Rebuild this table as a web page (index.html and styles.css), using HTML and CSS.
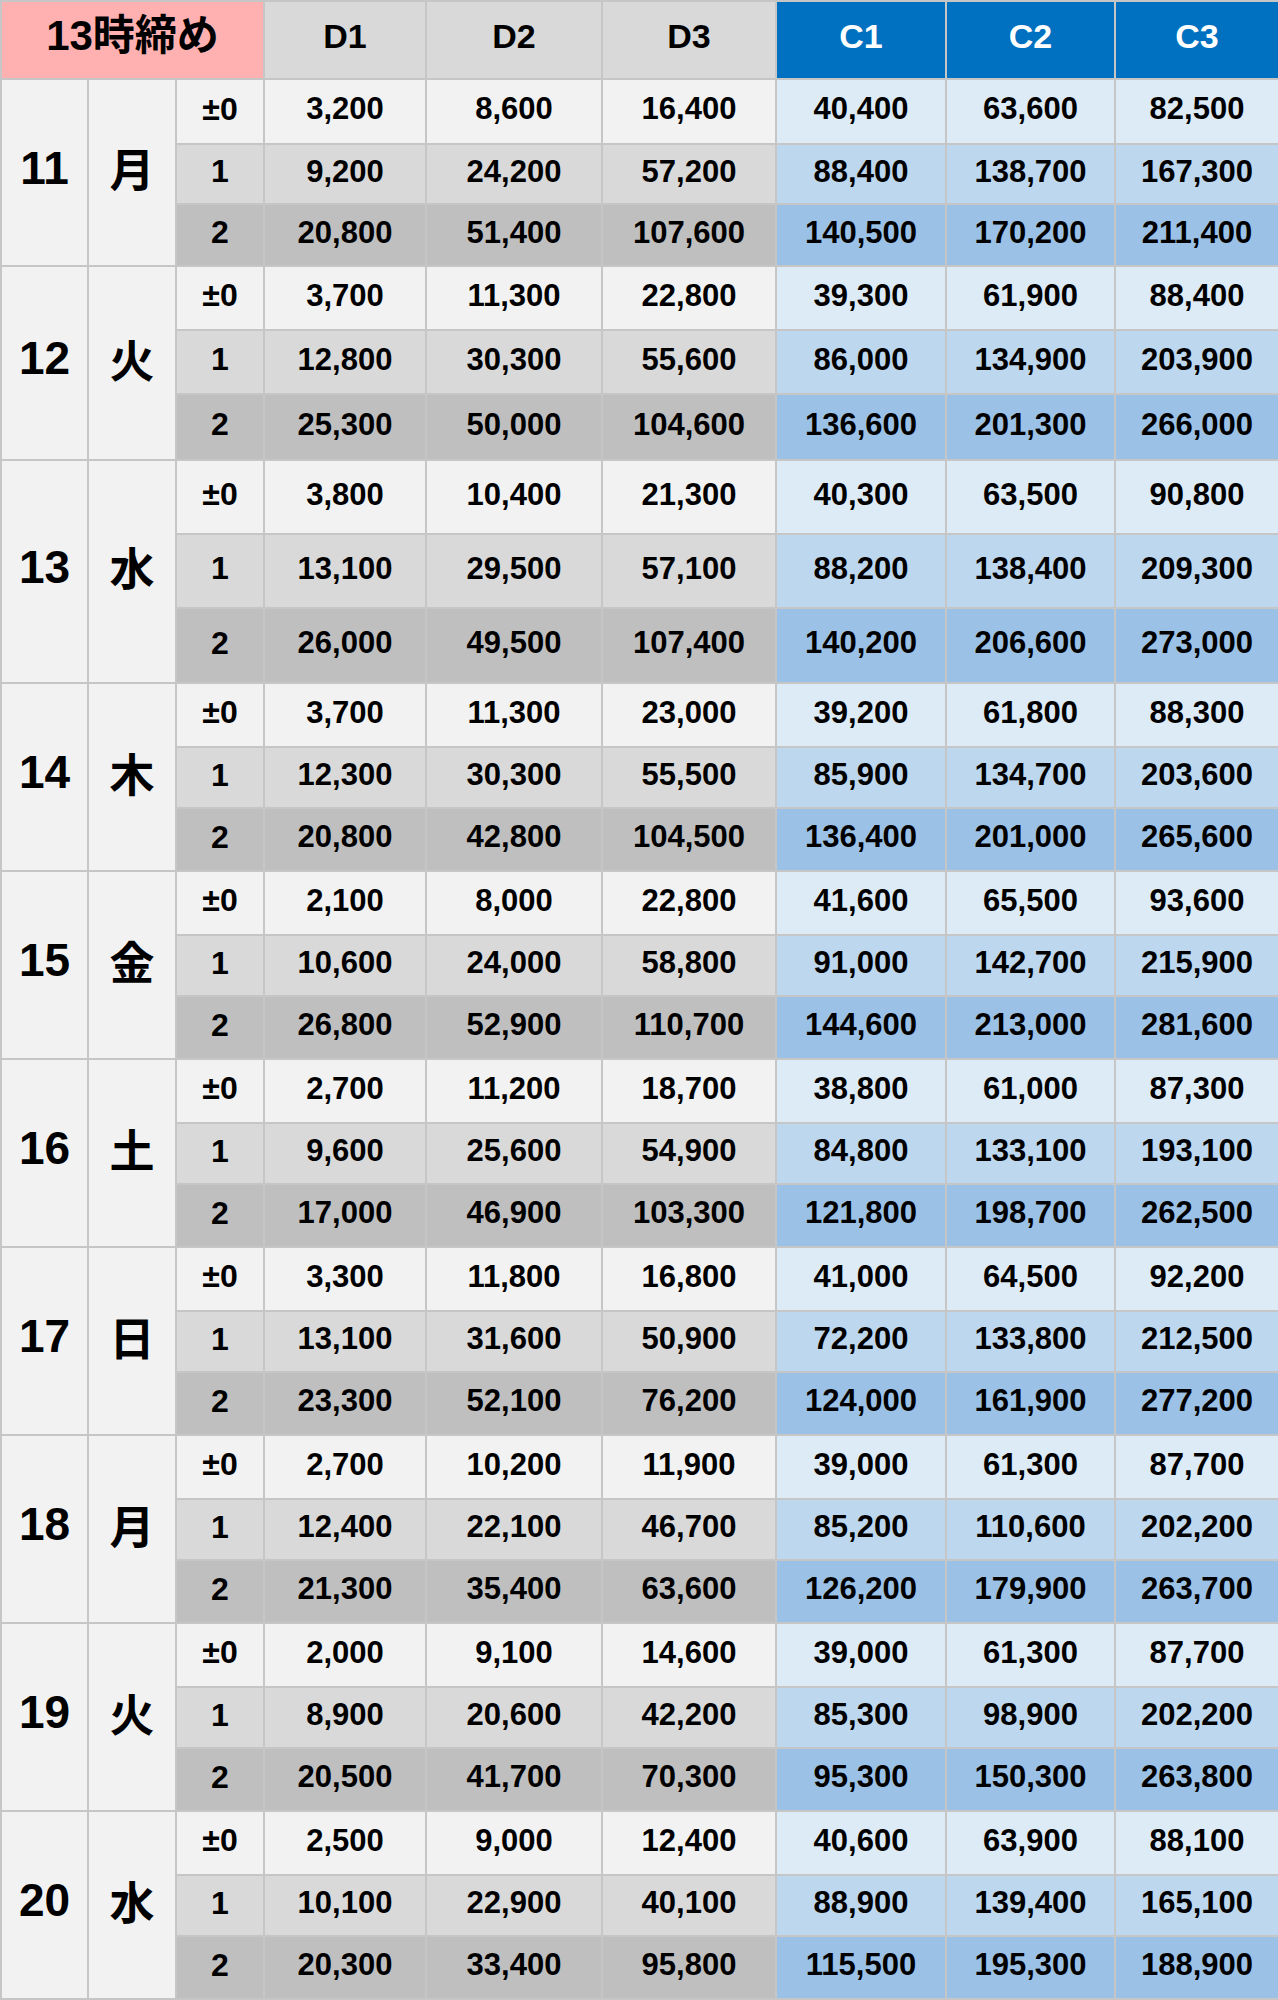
FILE: index.html
```html
<!DOCTYPE html>
<html lang="ja">
<head>
<meta charset="utf-8">
<title>13時締め</title>
<link rel="stylesheet" href="styles.css">
</head>
<body>
<table class="grid">
  <colgroup>
    <col class="w-day"><col class="w-wd"><col class="w-lbl">
    <col class="w-d1"><col class="w-d2"><col class="w-d3">
    <col class="w-c1"><col class="w-c2"><col class="w-c3">
  </colgroup>
  <thead>
    <tr class="head">
      <th colspan="3" class="h-title">13時締め</th>
      <th class="h-d">D1</th><th class="h-d">D2</th><th class="h-d">D3</th>
      <th class="h-c">C1</th><th class="h-c">C2</th><th class="h-c">C3</th>
    </tr>
  </thead>
  <tbody class="blk b11">
    <tr class="r0"><td rowspan="3" class="day">11</td><td rowspan="3" class="wd">月</td><td class="lbl">±0</td><td>3,200</td><td>8,600</td><td>16,400</td><td class="c">40,400</td><td class="c">63,600</td><td class="c">82,500</td></tr>
    <tr class="r1"><td class="lbl">1</td><td>9,200</td><td>24,200</td><td>57,200</td><td class="c">88,400</td><td class="c">138,700</td><td class="c">167,300</td></tr>
    <tr class="r2"><td class="lbl">2</td><td>20,800</td><td>51,400</td><td>107,600</td><td class="c">140,500</td><td class="c">170,200</td><td class="c">211,400</td></tr>
  </tbody>
  <tbody class="blk b12">
    <tr class="r0"><td rowspan="3" class="day">12</td><td rowspan="3" class="wd">火</td><td class="lbl">±0</td><td>3,700</td><td>11,300</td><td>22,800</td><td class="c">39,300</td><td class="c">61,900</td><td class="c">88,400</td></tr>
    <tr class="r1"><td class="lbl">1</td><td>12,800</td><td>30,300</td><td>55,600</td><td class="c">86,000</td><td class="c">134,900</td><td class="c">203,900</td></tr>
    <tr class="r2"><td class="lbl">2</td><td>25,300</td><td>50,000</td><td>104,600</td><td class="c">136,600</td><td class="c">201,300</td><td class="c">266,000</td></tr>
  </tbody>
  <tbody class="blk b13">
    <tr class="r0"><td rowspan="3" class="day">13</td><td rowspan="3" class="wd">水</td><td class="lbl">±0</td><td>3,800</td><td>10,400</td><td>21,300</td><td class="c">40,300</td><td class="c">63,500</td><td class="c">90,800</td></tr>
    <tr class="r1"><td class="lbl">1</td><td>13,100</td><td>29,500</td><td>57,100</td><td class="c">88,200</td><td class="c">138,400</td><td class="c">209,300</td></tr>
    <tr class="r2"><td class="lbl">2</td><td>26,000</td><td>49,500</td><td>107,400</td><td class="c">140,200</td><td class="c">206,600</td><td class="c">273,000</td></tr>
  </tbody>
  <tbody class="blk">
    <tr class="r0"><td rowspan="3" class="day">14</td><td rowspan="3" class="wd">木</td><td class="lbl">±0</td><td>3,700</td><td>11,300</td><td>23,000</td><td class="c">39,200</td><td class="c">61,800</td><td class="c">88,300</td></tr>
    <tr class="r1"><td class="lbl">1</td><td>12,300</td><td>30,300</td><td>55,500</td><td class="c">85,900</td><td class="c">134,700</td><td class="c">203,600</td></tr>
    <tr class="r2"><td class="lbl">2</td><td>20,800</td><td>42,800</td><td>104,500</td><td class="c">136,400</td><td class="c">201,000</td><td class="c">265,600</td></tr>
  </tbody>
  <tbody class="blk">
    <tr class="r0"><td rowspan="3" class="day">15</td><td rowspan="3" class="wd">金</td><td class="lbl">±0</td><td>2,100</td><td>8,000</td><td>22,800</td><td class="c">41,600</td><td class="c">65,500</td><td class="c">93,600</td></tr>
    <tr class="r1"><td class="lbl">1</td><td>10,600</td><td>24,000</td><td>58,800</td><td class="c">91,000</td><td class="c">142,700</td><td class="c">215,900</td></tr>
    <tr class="r2"><td class="lbl">2</td><td>26,800</td><td>52,900</td><td>110,700</td><td class="c">144,600</td><td class="c">213,000</td><td class="c">281,600</td></tr>
  </tbody>
  <tbody class="blk">
    <tr class="r0"><td rowspan="3" class="day">16</td><td rowspan="3" class="wd">土</td><td class="lbl">±0</td><td>2,700</td><td>11,200</td><td>18,700</td><td class="c">38,800</td><td class="c">61,000</td><td class="c">87,300</td></tr>
    <tr class="r1"><td class="lbl">1</td><td>9,600</td><td>25,600</td><td>54,900</td><td class="c">84,800</td><td class="c">133,100</td><td class="c">193,100</td></tr>
    <tr class="r2"><td class="lbl">2</td><td>17,000</td><td>46,900</td><td>103,300</td><td class="c">121,800</td><td class="c">198,700</td><td class="c">262,500</td></tr>
  </tbody>
  <tbody class="blk">
    <tr class="r0"><td rowspan="3" class="day">17</td><td rowspan="3" class="wd">日</td><td class="lbl">±0</td><td>3,300</td><td>11,800</td><td>16,800</td><td class="c">41,000</td><td class="c">64,500</td><td class="c">92,200</td></tr>
    <tr class="r1"><td class="lbl">1</td><td>13,100</td><td>31,600</td><td>50,900</td><td class="c">72,200</td><td class="c">133,800</td><td class="c">212,500</td></tr>
    <tr class="r2"><td class="lbl">2</td><td>23,300</td><td>52,100</td><td>76,200</td><td class="c">124,000</td><td class="c">161,900</td><td class="c">277,200</td></tr>
  </tbody>
  <tbody class="blk">
    <tr class="r0"><td rowspan="3" class="day">18</td><td rowspan="3" class="wd">月</td><td class="lbl">±0</td><td>2,700</td><td>10,200</td><td>11,900</td><td class="c">39,000</td><td class="c">61,300</td><td class="c">87,700</td></tr>
    <tr class="r1"><td class="lbl">1</td><td>12,400</td><td>22,100</td><td>46,700</td><td class="c">85,200</td><td class="c">110,600</td><td class="c">202,200</td></tr>
    <tr class="r2"><td class="lbl">2</td><td>21,300</td><td>35,400</td><td>63,600</td><td class="c">126,200</td><td class="c">179,900</td><td class="c">263,700</td></tr>
  </tbody>
  <tbody class="blk">
    <tr class="r0"><td rowspan="3" class="day">19</td><td rowspan="3" class="wd">火</td><td class="lbl">±0</td><td>2,000</td><td>9,100</td><td>14,600</td><td class="c">39,000</td><td class="c">61,300</td><td class="c">87,700</td></tr>
    <tr class="r1"><td class="lbl">1</td><td>8,900</td><td>20,600</td><td>42,200</td><td class="c">85,300</td><td class="c">98,900</td><td class="c">202,200</td></tr>
    <tr class="r2"><td class="lbl">2</td><td>20,500</td><td>41,700</td><td>70,300</td><td class="c">95,300</td><td class="c">150,300</td><td class="c">263,800</td></tr>
  </tbody>
  <tbody class="blk">
    <tr class="r0"><td rowspan="3" class="day">20</td><td rowspan="3" class="wd">水</td><td class="lbl">±0</td><td>2,500</td><td>9,000</td><td>12,400</td><td class="c">40,600</td><td class="c">63,900</td><td class="c">88,100</td></tr>
    <tr class="r1"><td class="lbl">1</td><td>10,100</td><td>22,900</td><td>40,100</td><td class="c">88,900</td><td class="c">139,400</td><td class="c">165,100</td></tr>
    <tr class="r2"><td class="lbl">2</td><td>20,300</td><td>33,400</td><td>95,800</td><td class="c">115,500</td><td class="c">195,300</td><td class="c">188,900</td></tr>
  </tbody>
</table>
</body>
</html>
```
FILE: styles.css
```css
html, body {
  margin: 0;
  padding: 0;
  background: #ffffff;
}

.grid {
  width: 1278px;
  border-collapse: collapse;
  table-layout: fixed;
  font-family: "Liberation Sans", Arial, "Noto Sans CJK JP", sans-serif;
  font-weight: bold;
  color: #000;
}

.w-day { width: 87px; }
.w-wd  { width: 88px; }
.w-lbl { width: 88px; }
.w-d1  { width: 162px; }
.w-d2  { width: 176px; }
.w-d3  { width: 174px; }
.w-c1  { width: 170px; }
.w-c2  { width: 169px; }
.w-c3  { width: 164px; }

.grid th,
.grid td {
  border: 2px solid #c6c6c6;
  text-align: center;
  vertical-align: middle;
  padding: 0 0 6px 0;
  font-size: 31px;
  line-height: 1;
  box-sizing: border-box;
  white-space: nowrap;
}

.grid td.lbl {
  font-size: 32px;
}

.grid .head th {
  height: 78px;
  padding-bottom: 8px;
  font-size: 34px;
}

.grid .head .h-title {
  background: #ffb1b1;
  font-family: "Liberation Sans", Arial, "Noto Sans CJK JP", sans-serif;
  font-size: 42px;
}

.grid .h-d {
  background: #d9d9d9;
}

.grid .h-c {
  background: #0070c0;
  color: #ffffff;
}

.grid td.day,
.grid td.wd {
  background: #f2f2f2;
  font-size: 46px;
  padding-bottom: 10px;
}

.grid td.wd {
  font-family: "Noto Sans CJK JP", "Liberation Sans", sans-serif;
  font-size: 45px;
  font-weight: 700;
}

.r0 td { background: #f2f2f2; height: 64px; }
.r1 td { background: #d9d9d9; height: 61px; }
.r2 td { background: #bfbfbf; height: 63px; }

.r0 td.c { background: #ddebf7; }
.r1 td.c { background: #bdd7ee; }
.r2 td.c { background: #9bc2e6; }

.b11 .r0 td { height: 65px; }
.b11 .r1 td { height: 60px; }
.b11 .r2 td { height: 62px; }

.b12 .r0 td { height: 64px; }
.b12 .r1 td { height: 64px; }
.b12 .r2 td { height: 66px; }

.b13 .r0 td { height: 74px; }
.b13 .r1 td { height: 74px; }
.b13 .r2 td { height: 75px; }
```
